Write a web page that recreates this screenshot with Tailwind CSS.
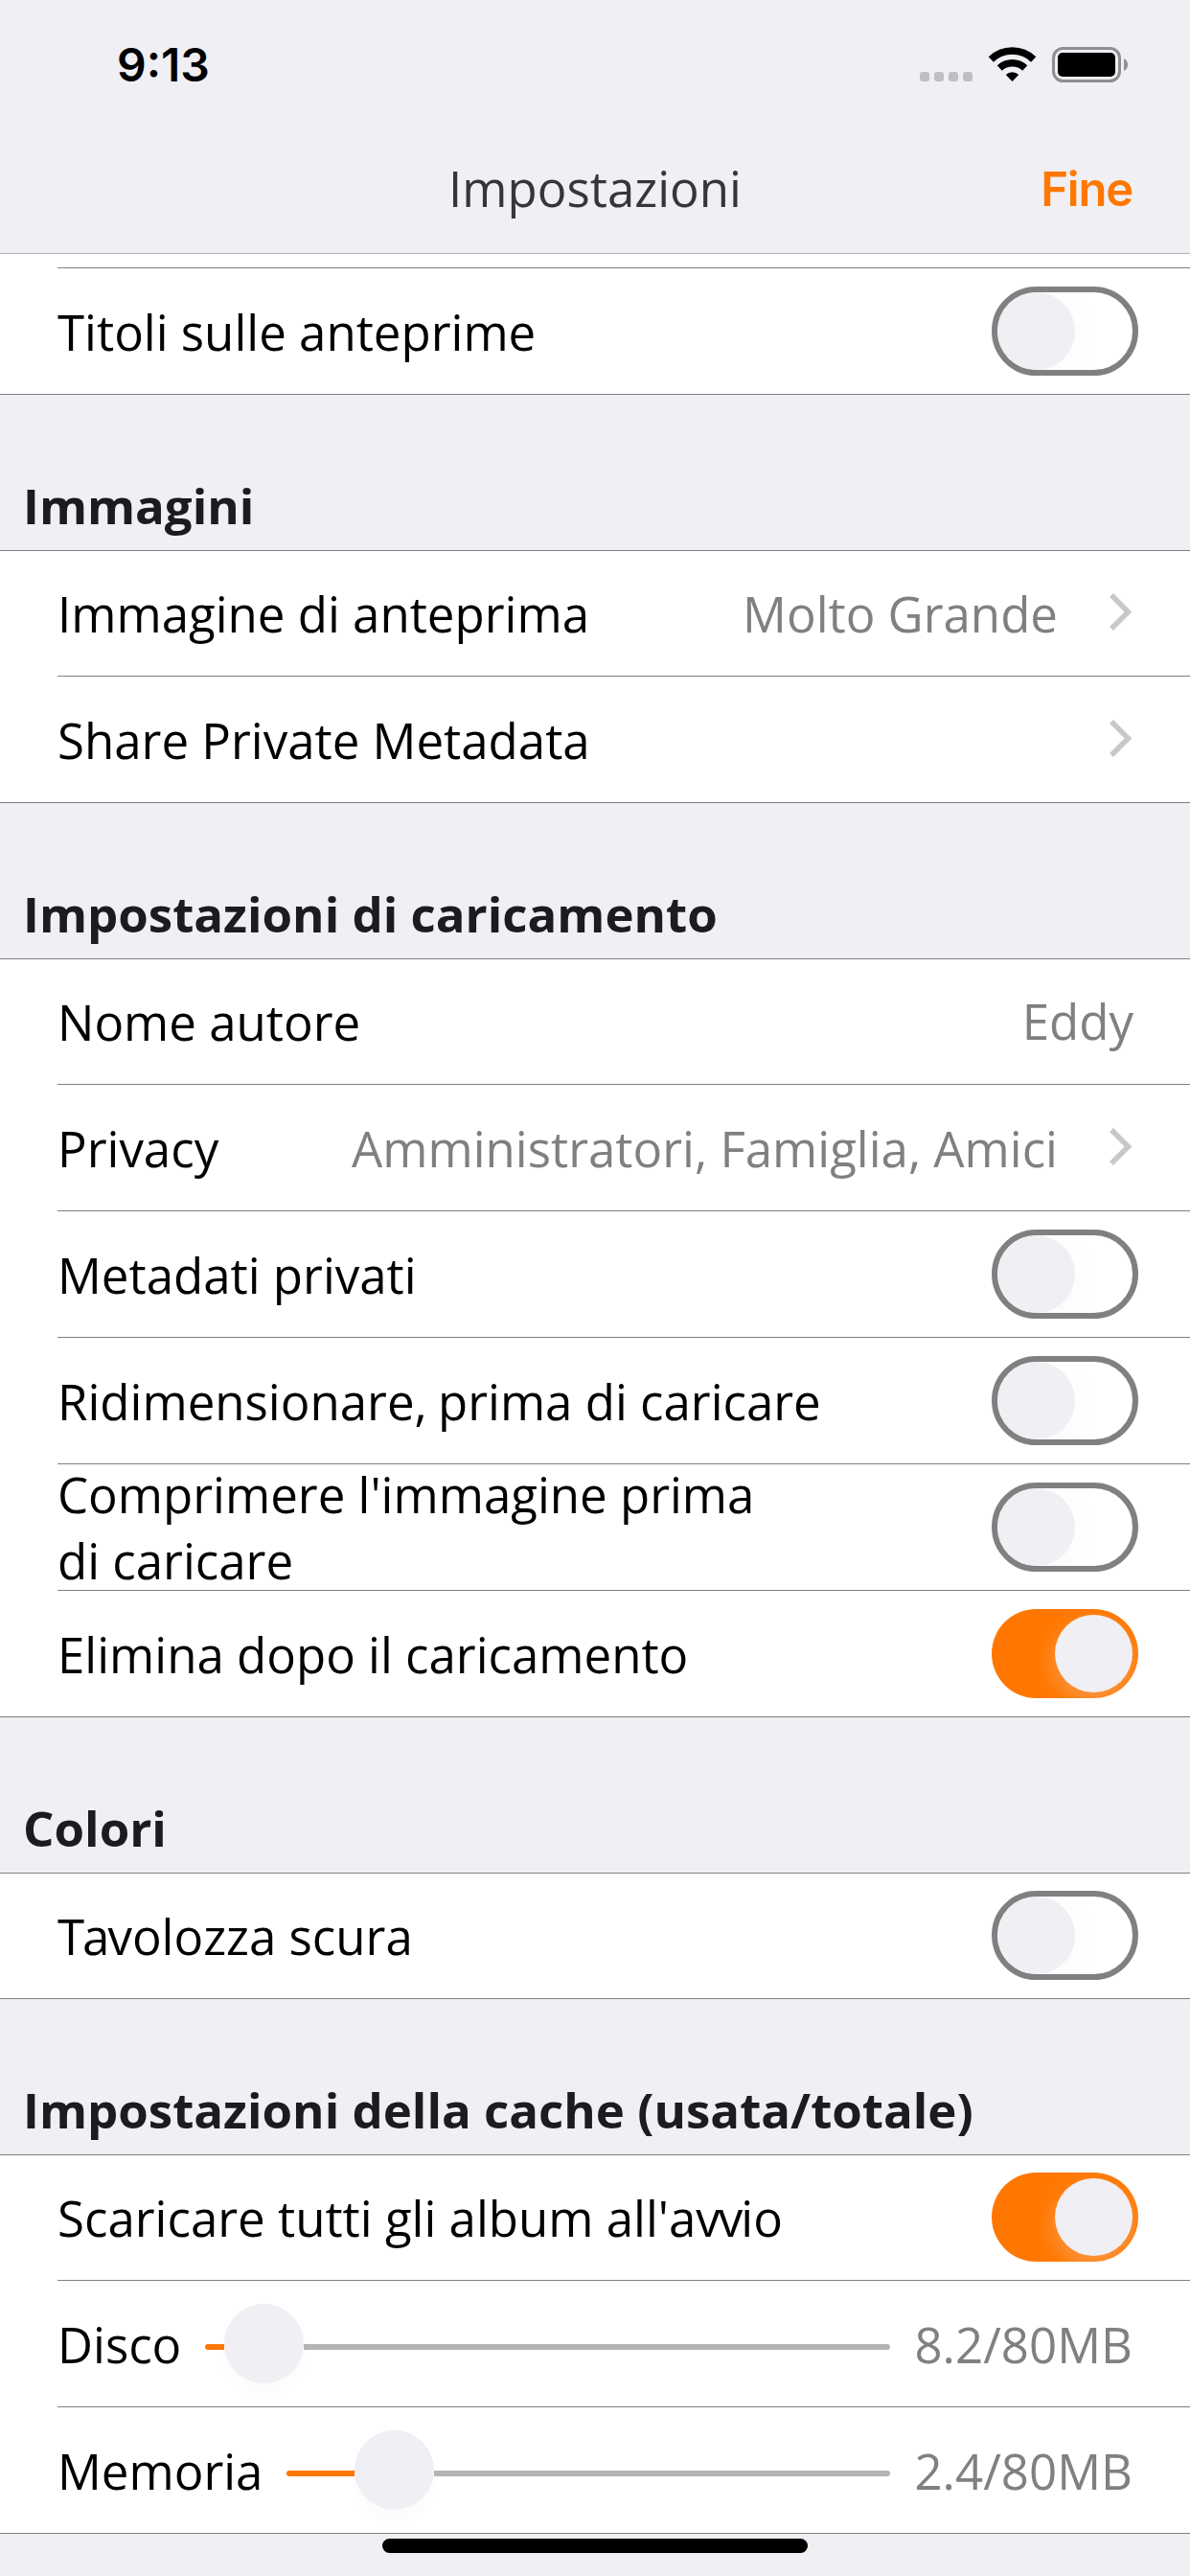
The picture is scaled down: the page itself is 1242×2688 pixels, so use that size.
<!DOCTYPE html>
<html lang="it">
<head>
<meta charset="utf-8">
<title>Impostazioni</title>
<script src="https://cdn.jsdelivr.net/npm/@tailwindcss/browser@4"></script>
</head>
<body class="relative h-[2688px] w-[1242px] overflow-hidden bg-[#efeff4] font-['Open_Sans',sans-serif] text-[51px] leading-[69px] text-black">

<header class="h-[265px] border-b border-[#b2b2b5]">
  <div class="flex h-[132px] justify-between pt-[49px] pr-[65px] pl-[122px]">
    <div class="-mt-[11px] font-['Inter',sans-serif] text-[48px] leading-[60px] font-semibold">9:13</div>
    <svg class="h-[37px] w-[217px]" viewBox="0 0 217 37">
      <g fill="#bfbfc3">
        <rect x="0" y="26" width="10" height="10" rx="3"/><rect x="15" y="26" width="10" height="10" rx="3"/><rect x="30" y="26" width="10" height="10" rx="3"/><rect x="45" y="26" width="10" height="10" rx="3"/>
      </g>
      <g fill="none" stroke="#000" stroke-width="7.5">
        <path d="M74.3 13a32 32 0 0 1 44.4 0"/>
        <path d="M83.300 22a19.500 19.500 0 0 1 26.400 0"/>
      </g>
      <path d="M89.800 28.900a10 10 0 0 1 13.400 0L96.500 36z"/>
      <rect x="139.500" y="1.500" width="69" height="34" rx="10" fill="none" stroke="#8f8f92" stroke-width="3"/>
      <rect x="144" y="6" width="60" height="25" rx="5"/>
      <path d="M213 12q4 2 4 6.500t-4 6.500z" fill="#8f8f92"/>
    </svg>
  </div>
  <div class="grid grid-cols-[1fr_auto_1fr] items-start pt-[30px] pr-[60px] pl-[60px]">
    <span></span>
    <h1 class="text-[#363638]">Impostazioni</h1>
    <span class="mt-px text-right font-['Inter',sans-serif] text-[49px] font-semibold tracking-[-1.2px] text-[#ff7700]">Fine</span>
  </div>
</header>

<main>
  <section class="h-[147px] border-b border-[#808080] bg-white pt-[14px] pl-[60px]">
    <div class="flex h-[132px] items-start justify-between border-t border-[#808080] pt-[19px] pr-[54px]">
      <span class="mt-[13px]">Titoli sulle anteprime</span>
      <span class="h-[93px] w-[153px] overflow-hidden rounded-full border-6 border-[#808080]"><span class="block size-[81px] rounded-full bg-[#efeff4] shadow-[0_9px_24px_rgba(239,239,244,0.3)]"></span></span>
    </div>
  </section>

  <h2 class="h-[162px] pt-[81px] pl-[24px] font-bold text-[#1c1c1e]">Immagini</h2>
  <section class="border-y border-[#808080] bg-white pl-[60px]">
    <div class="flex h-[130px] items-start pt-[18px] pr-[60px]">
      <span class="mt-[13px] grow">Immagine di anteprima</span>
      <span class="mt-[13px] mr-[54px] text-[#808080]">Molto Grande</span>
      <svg class="mt-[26px] h-[39px] w-[24px]" viewBox="0 0 24 39"><path d="M2 2L19.500 19.500L2 37" fill="none" stroke="#c7c7cc" stroke-width="5.500"/></svg>
    </div>
    <div class="flex h-[132px] items-start border-t border-[#808080] pt-[19px] pr-[60px]">
      <span class="mt-[13px] grow">Share Private Metadata</span>
      <svg class="mt-[26px] h-[39px] w-[24px]" viewBox="0 0 24 39"><path d="M2 2L19.500 19.500L2 37" fill="none" stroke="#c7c7cc" stroke-width="5.500"/></svg>
    </div>
  </section>

  <h2 class="h-[162px] pt-[81px] pl-[24px] font-bold text-[#1c1c1e]">Impostazioni di caricamento</h2>
  <section class="border-y border-[#808080] bg-white pl-[60px]">
    <div class="flex h-[130px] items-start justify-between pt-[18px] pr-[59px]">
      <span class="mt-[13px]">Nome autore</span>
      <span class="mt-[12px] text-[#808080]">Eddy</span>
    </div>
    <div class="flex h-[132px] items-start border-t border-[#808080] pt-[19px] pr-[60px]">
      <span class="mt-[13px] grow">Privacy</span>
      <span class="mt-[13px] mr-[54px] text-[#808080]">Amministratori, Famiglia, Amici</span>
      <svg class="mt-[26px] h-[39px] w-[24px]" viewBox="0 0 24 39"><path d="M2 2L19.500 19.500L2 37" fill="none" stroke="#c7c7cc" stroke-width="5.500"/></svg>
    </div>
    <div class="flex h-[132px] items-start justify-between border-t border-[#808080] pt-[19px] pr-[54px]">
      <span class="mt-[13px]">Metadati privati</span>
      <span class="h-[93px] w-[153px] overflow-hidden rounded-full border-6 border-[#808080]"><span class="block size-[81px] rounded-full bg-[#efeff4] shadow-[0_9px_24px_rgba(239,239,244,0.3)]"></span></span>
    </div>
    <div class="flex h-[132px] items-start justify-between border-t border-[#808080] pt-[19px] pr-[54px]">
      <span class="mt-[13px]">Ridimensionare<span class="tracking-[-2px]">,</span> prima di caricare</span>
      <span class="h-[93px] w-[153px] overflow-hidden rounded-full border-6 border-[#808080]"><span class="block size-[81px] rounded-full bg-[#efeff4] shadow-[0_9px_24px_rgba(239,239,244,0.3)]"></span></span>
    </div>
    <div class="flex h-[132px] items-start justify-between border-t border-[#808080] pt-[19px] pr-[54px]">
      <span class="-mt-[22px]">Comprimere l'immagine prima<br>di caricare</span>
      <span class="h-[93px] w-[153px] overflow-hidden rounded-full border-6 border-[#808080]"><span class="block size-[81px] rounded-full bg-[#efeff4] shadow-[0_9px_24px_rgba(239,239,244,0.3)]"></span></span>
    </div>
    <div class="flex h-[132px] items-start justify-between border-t border-[#808080] pt-[19px] pr-[54px]">
      <span class="mt-[13px]">Elimina dopo il caricamento</span>
      <span class="flex h-[93px] w-[153px] justify-end overflow-hidden rounded-full bg-[#ff7700] p-[6px]"><span class="block size-[81px] rounded-full bg-[#efeff4] shadow-[0_9px_24px_rgba(239,239,244,0.3)]"></span></span>
    </div>
  </section>

  <h2 class="h-[162px] pt-[81px] pl-[24px] font-bold text-[#1c1c1e]">Colori</h2>
  <section class="border-y border-[#808080] bg-white pl-[60px]">
    <div class="flex h-[130px] items-start justify-between pt-[18px] pr-[54px]">
      <span class="mt-[13px]"><span class="tracking-[-2px]">Ta</span>volozza scura</span>
      <span class="h-[93px] w-[153px] overflow-hidden rounded-full border-6 border-[#808080]"><span class="block size-[81px] rounded-full bg-[#efeff4] shadow-[0_9px_24px_rgba(239,239,244,0.3)]"></span></span>
    </div>
  </section>

  <h2 class="h-[162px] pt-[81px] pl-[24px] font-bold text-[#1c1c1e]">Impostazioni della cache (usata/totale)</h2>
  <section class="border-y border-[#808080] bg-white pl-[60px]">
    <div class="flex h-[130px] items-start justify-between pt-[18px] pr-[54px]">
      <span class="mt-[13px]">Scaricare tutti gli album all'a<span class="tracking-[-2px]">vv</span>io</span>
      <span class="flex h-[93px] w-[153px] justify-end overflow-hidden rounded-full bg-[#ff7700] p-[6px]"><span class="block size-[81px] rounded-full bg-[#efeff4] shadow-[0_9px_24px_rgba(239,239,244,0.3)]"></span></span>
    </div>
    <div class="flex h-[132px] items-start border-t border-[#808080] pt-[19px] pr-[60px]">
      <span class="mt-[13px] w-[154px]">Disco</span>
      <span class="mt-[5px] flex h-[83px] w-[715px] items-start">
        <span class="mt-[42px] h-[6px] w-[20px] rounded-l-full bg-[#ff7700]"></span>
        <span class="size-[83px] rounded-full bg-[#efeff4] shadow-[0_12px_12px_rgba(0,0,0,0.015)]"></span>
        <span class="mt-[42px] h-[6px] grow rounded-r-full bg-[#b4b4b4]"></span>
      </span>
      <span class="mt-[13px] grow text-right text-[#808080]">8.2/80MB</span>
    </div>
    <div class="flex h-[132px] items-start border-t border-[#808080] pt-[19px] pr-[60px]">
      <span class="mt-[13px] w-[239px]">Memoria</span>
      <span class="mt-[5px] flex h-[83px] w-[630px] items-start">
        <span class="mt-[42px] h-[6px] w-[71px] rounded-l-full bg-[#ff7700]"></span>
        <span class="size-[83px] rounded-full bg-[#efeff4] shadow-[0_12px_12px_rgba(0,0,0,0.015)]"></span>
        <span class="mt-[42px] h-[6px] grow rounded-r-full bg-[#b4b4b4]"></span>
      </span>
      <span class="mt-[13px] grow text-right text-[#808080]">2.4/80MB</span>
    </div>
  </section>
</main>

<div class="mx-auto mt-[5px] h-[15px] w-[444px] rounded-full bg-black"></div>
</body>
</html>
